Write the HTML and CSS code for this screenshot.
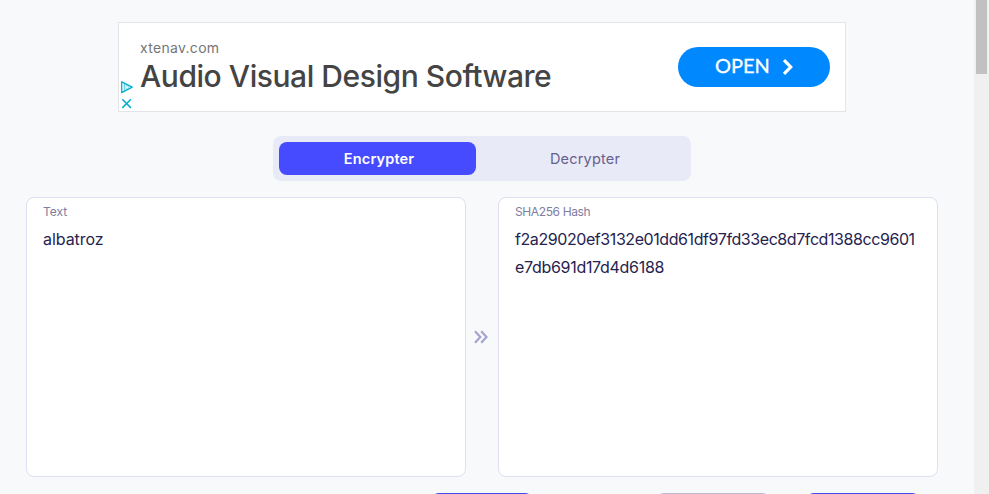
FILE: index.html
```html
<!DOCTYPE html>
<html lang="en">
<head>
<meta charset="utf-8">
<title>SHA256 Encrypter</title>
<link rel="stylesheet" href="styles.css">
</head>
<body>
<main class="content">
  <section class="ad">
    <div class="ad-controls">
      <svg width="14" height="14" viewBox="0 0 14 14" fill="none" stroke="#00aecd" stroke-width="1.3" stroke-linejoin="round"><path d="M1.7 1.8v10.8L12.2 7.2z"/><path d="M4.3 3.6v7.4" stroke-width=".7"/><path d="M5.9 5v4.4L9.1 7.2z" stroke-width=".4"/></svg>
      <svg width="14" height="14" viewBox="0 0 14 14" fill="none" stroke="#00aecd" stroke-width="1.5"><path d="M2.3 2.3l8.6 8.6M10.9 2.3l-8.6 8.6"/></svg>
    </div>
    <div class="ad-copy">
      <div class="ad-domain"><span>xtenav.com</span></div>
      <div class="ad-title"><span>Audio Visual Design Software</span></div>
    </div>
    <a class="ad-open"><span>OPEN</span><svg width="12" height="18" viewBox="0 0 12 18" fill="none" stroke="#fff" stroke-width="3.2"><path d="M2 2.2L8.7 9L2 15.8"/></svg></a>
  </section>
  <nav class="tabs">
    <button class="tab active"><span>Encrypter</span></button>
    <button class="tab"><span>Decrypter</span></button>
  </nav>
  <section class="panels">
    <div class="panel"><div class="label text-label">Text</div><div class="value plain">albatroz</div></div>
    <div class="arrow"><svg width="14" height="14" viewBox="0 0 14 14" fill="none" stroke="#a5a3cf" stroke-width="2.2"><path d="M1 1.3L6.3 7L1 12.7M7.2 1.3L12.5 7L7.2 12.7"/></svg></div>
    <div class="panel"><div class="label hash-label">SHA256 Hash</div><div class="value"><div class="hash-one">f2a29020ef3132e01dd61df97fd33ec8d7fcd1388cc9601</div><div class="hash-two">e7db691d17d4d6188</div></div></div>
  </section>
  <div class="actions"><i class="action encrypt"></i><i class="action muted"></i><i class="action copy"></i></div>
</main>
<aside class="scrollbar"><div class="thumb"></div></aside>
</body>
</html>
```
FILE: styles.css
```css
* { box-sizing: border-box; }
body { margin: 0; height: 494px; overflow: hidden; display: flex; background: #f8f9fb; font-family: Inter, sans-serif; color: #25234f; }
.content { width: 974px; height: 494px; overflow: hidden; padding: 22px 36px 0 26px; }
.ad { width: 728px; height: 90px; margin-left: 92px; border: 1px solid #e2e4e7; background: #fff; display: flex; padding-right: 15px; align-items: center; }
.ad-controls { width: 21px; height: 88px; display: flex; flex-direction: column; padding: 57px 0 0 1px; gap: 3px; }
.ad-copy { flex: 1; height: 88px; padding-top: 15px; white-space: nowrap; }
.ad-domain { font-size: 14px; line-height: 20px; color: #757575; letter-spacing: .3px; }
.ad-title { font-size: 30px; line-height: 36px; font-weight: 500; color: #444; letter-spacing: -.45px; }
.ad-open { width: 152px; height: 40px; border-radius: 20px; background: #08f; color: #fff; display: flex; align-items: center; padding-left: 37px; font: 400 20px/36px Lato, sans-serif; }
.ad-open span { width: 67px; height: 40px; -webkit-text-stroke: .3px #fff; }
.tabs { width: 418px; height: 45px; margin: 24px 0 0 247px; padding: 6px; border-radius: 8px; background: #e9eaf7; display: flex; gap: 12px; }
.tab { width: 197px; height: 33px; padding: 0 3px 0 0; border: 0; border-radius: 8px; background: transparent; font: 400 14.5px/33px Inter, sans-serif; letter-spacing: .2px; color: #65618e; }
.tab.active { background: #464bff; color: #fff; font-weight: 600; padding: 0 0 0 3px; letter-spacing: .15px; }
.panels { margin-top: 16px; height: 280px; display: flex; }
.panel { width: 440px; height: 280px; border: 1px solid #dedff0; border-radius: 8px; background: #fff; padding: 5px 16px; }
.arrow { width: 32px; display: flex; align-items: center; justify-content: center; padding: 0 2px 1px 0; }
.label { font-size: 12px; line-height: 18px; color: #807d9e; }
.value { margin-top: 4px; font-size: 16px; font-weight: 400; line-height: 28px; white-space: nowrap; }
.hash-label { letter-spacing: -.38px; }
.plain { letter-spacing: -.05px; }
.hash-one { letter-spacing: -.42px; }
.hash-two { letter-spacing: -.3px; }
.actions { display: flex; margin-top: 16px; padding-left: 405px; }
.action { height: 40px; border-radius: 8px; background: #464bea; }
.encrypt { width: 102px; }
.muted { width: 114px; margin-left: 123px; background: #bbb9d3; }
.copy { width: 114px; margin-left: 36px; }
.scrollbar { width: 15px; background: #f0f0f0; padding-left: 2px; }
.thumb { width: 11px; height: 74px; background: #c1c1c1; }
```
